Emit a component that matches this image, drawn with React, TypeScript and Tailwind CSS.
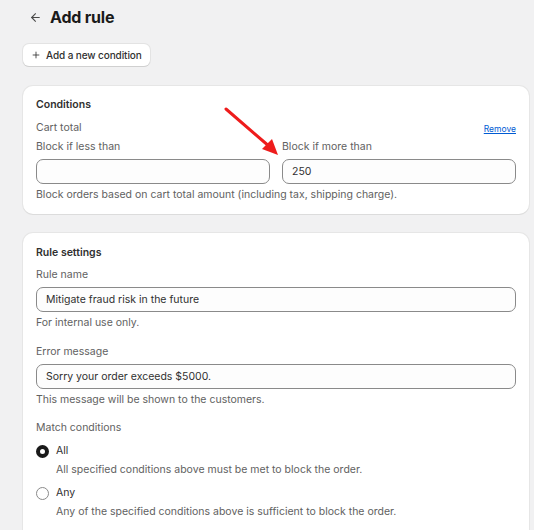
import { ArrowLeft, Plus } from "lucide-react";

// ── Small bits ────────────────────────────────────────────────────────────────

function TextInput({ value }: { value?: string }) {
  return (
    <div className="h-[25px] w-full rounded-[7px] border border-[#8a8a8a] bg-[#fdfdfd] px-[9px] flex items-center text-[10.5px] leading-[14px] text-[#303030]">
      {value}
    </div>
  );
}

function Radio({ checked, label, help }: { checked: boolean; label: string; help: string }) {
  return (
    <div>
      <div className="flex items-center gap-[7px] h-[14px]">
        {checked ? (
          <span className="w-[13px] h-[13px] rounded-full border-[4px] border-[#1a1a1a] bg-white" />
        ) : (
          <span className="w-[13px] h-[13px] rounded-full border border-[#8a8a8a] bg-white" />
        )}
        <span className="text-[10.5px] leading-[14px] text-[#303030]">{label}</span>
      </div>
      <p className="pl-[20px] mt-[5px] text-[10.5px] leading-[14px] text-[#616161]">{help}</p>
    </div>
  );
}

// ── Page ──────────────────────────────────────────────────────────────────────

export default function App() {
  return (
    <div
      className="relative w-[534px] h-[530px] overflow-hidden bg-[#f1f1f2]"
      style={{ fontFamily: "Inter, 'Noto Sans', sans-serif" }}
    >
      <div className="pl-[23px] pr-[5px]">
        {/* Header */}
        <div className="flex items-center h-[34px]">
          <ArrowLeft className="ml-[6px] w-[13px] h-[13px] text-[#4a4a4a]" strokeWidth={2} />
          <h1 className="ml-[8px] text-[16px] leading-[20px] font-bold text-[#1a1a1a] tracking-[-0.2px]">Add rule</h1>
        </div>

        {/* Add condition */}
        <div className="mt-[10px]">
          <button className="h-[22px] px-[8px] flex items-center gap-[5px] rounded-[6px] bg-white shadow-[0_1px_0_#d0d0d0,0_0_0_1px_#e3e3e3] text-[10px] leading-[14px] font-medium text-[#303030] tracking-[-0.1px]">
            <Plus className="w-[10px] h-[10px]" strokeWidth={2} />
            Add a new condition
          </button>
        </div>

        {/* Conditions card */}
        <div className="mt-[20px] rounded-[10px] bg-white shadow-[0_1px_0_#dcdcdc,0_0_0_1px_#e6e6e6] px-[13px] pt-[12px] pb-[12px] text-[10.5px] leading-[14px]">
          <p className="font-semibold text-[#303030]">Conditions</p>
          <div className="mt-[9px] flex items-end justify-between">
            <span className="text-[#616161]">Cart total</span>
            <span className="text-[8.5px] leading-[12px] text-[#005bd3] underline">Remove</span>
          </div>
          <div className="mt-[5px] grid grid-cols-2 gap-[12px]">
            <div>
              <p className="text-[#616161] mb-[5px]">Block if less than</p>
              <TextInput />
            </div>
            <div>
              <p className="text-[#616161] mb-[5px]">Block if more than</p>
              <TextInput value="250" />
            </div>
          </div>
          <p className="mt-[4px] text-[#616161]">
            Block orders based on cart total amount (including tax, shipping charge).
          </p>
        </div>

        {/* Rule settings card */}
        <div className="mt-[19px] rounded-[10px] bg-white shadow-[0_1px_0_#dcdcdc,0_0_0_1px_#e6e6e6] px-[13px] pt-[13px] pb-[20px] text-[10.5px] leading-[14px]">
          <p className="font-semibold text-[#303030]">Rule settings</p>

          <p className="mt-[8px] text-[#616161]">Rule name</p>
          <div className="mt-[5px]">
            <TextInput value="Mitigate fraud risk in the future" />
          </div>
          <p className="mt-[4px] text-[#616161]">For internal use only.</p>

          <p className="mt-[15px] text-[#616161]">Error message</p>
          <div className="mt-[5px]">
            <TextInput value="Sorry your order exceeds $5000." />
          </div>
          <p className="mt-[4px] text-[#616161]">This message will be shown to the customers.</p>

          <p className="mt-[14px] text-[#616161]">Match conditions</p>
          <div className="mt-[9px] flex flex-col gap-[9px]">
            <Radio checked label="All" help="All specified conditions above must be met to block the order." />
            <Radio checked={false} label="Any" help="Any of the specified conditions above is sufficient to block the order." />
          </div>
        </div>
      </div>

      {/* Annotation arrow */}
      <svg className="absolute left-[222px] top-[105px]" width="62" height="56" viewBox="0 0 62 56">
        <line x1="4" y1="4" x2="48" y2="42" stroke="#ee1c1c" strokeWidth="3" strokeLinecap="round" />
        <polygon points="56,50 40,44 50,34" fill="#ee1c1c" />
      </svg>
    </div>
  );
}
